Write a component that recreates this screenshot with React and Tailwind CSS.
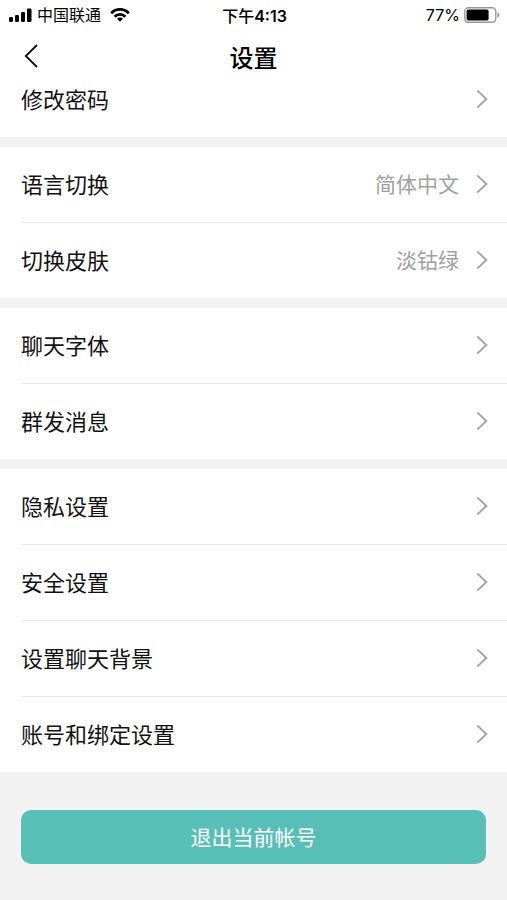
import React from 'react';

const sections = [
  [{ label: '修改密码' }],
  [
    { label: '语言切换', value: '简体中文' },
    { label: '切换皮肤', value: '淡钴绿' },
  ],
  [{ label: '聊天字体' }, { label: '群发消息' }],
  [
    { label: '隐私设置' },
    { label: '安全设置' },
    { label: '设置聊天背景' },
    { label: '账号和绑定设置' },
  ],
];

const SignalIcon = () => (
  <svg width="24" height="14" viewBox="0 0 24 14" fill="#000" aria-hidden="true">
    <rect x="0" y="9" width="4" height="5" rx="1.2" />
    <rect x="6" y="7" width="4" height="7" rx="1.2" />
    <rect x="12" y="4" width="4" height="10" rx="1.2" />
    <rect x="18" y="0.5" width="4.5" height="13.5" rx="1.2" />
  </svg>
);

const WifiIcon = () => (
  <svg width="20" height="14" viewBox="0 0 20 14" fill="none" stroke="#000" strokeWidth="2.7" aria-hidden="true">
    <path d="M1.2 5.2 C6 0.2 14 0.2 18.8 5.2" />
    <path d="M4.6 8.7 C7.6 5.6 12.4 5.6 15.4 8.7" />
    <path d="M10 13.8 L7 10.8 C8.8 9.2 11.2 9.2 13 10.8 Z" fill="#000" stroke="none" />
  </svg>
);

const BatteryIcon = () => (
  <svg width="36" height="16" viewBox="0 0 36 16" aria-hidden="true">
    <rect x="0.8" y="0.8" width="31" height="14.4" rx="3.6" fill="#fff" stroke="#999" strokeWidth="1.4" />
    <rect x="2.6" y="2.6" width="22" height="10.8" rx="1.6" fill="#000" />
    <path d="M33.4 5.4 C36.2 6.2 36.2 9.8 33.4 10.6 Z" fill="#999" />
  </svg>
);

const Chevron = () => (
  <svg width="12" height="20" viewBox="0 0 12 20" fill="none" stroke="#a3a3a3" strokeWidth="1.9" aria-hidden="true">
    <path d="M1.2 1.4 L10.4 10 L1.2 18.6" />
  </svg>
);

const SettingsRow = ({ label, value }) => (
  <li className="group pl-[21px]">
    <button
      type="button"
      className="box-content flex h-[75px] w-full items-center border-t border-[#e9e9e9] text-left group-first:border-t-0"
    >
      <span className="flex-1 pb-1 text-[22px] leading-8 text-[#111]">{label}</span>
      {value && <span className="pb-1 text-[21px] leading-8 text-[#a0a0a0]">{value}</span>}
      <span className="ml-[17px] mr-[19px] pb-0.5">
        <Chevron />
      </span>
    </button>
  </li>
);

const App = () => {
  return (
    <div className="min-h-screen bg-[#f2f2f2] font-['Noto_Sans_CJK_SC','Noto_Sans',sans-serif] text-black">
      <header className="relative z-10 bg-white">
        {/* Status bar */}
        <div className="grid h-[30px] grid-cols-[1fr_auto_1fr] items-center pl-[9px] pr-[7px] text-[16px] leading-6">
          <div className="flex items-center">
            <SignalIcon />
            <span className="ml-1 mr-[9px] pb-0.5">中国联通</span>
            <WifiIcon />
          </div>
          <span className="font-medium">
            下午<span className="font-['Inter',sans-serif] font-semibold">4:13</span>
          </span>
          <div className="flex items-center justify-end gap-1">
            <span className="font-['Inter',sans-serif]">77%</span>
            <BatteryIcon />
          </div>
        </div>

        {/* Title bar */}
        <div className="grid h-14 grid-cols-[1fr_auto_1fr] items-center px-6">
          <button type="button" aria-label="返回" className="w-4 pb-1">
            <svg width="14" height="24" viewBox="0 0 14 24" fill="none" stroke="#111" strokeWidth="1.9">
              <path d="M13 1 L1.8 12 L13 23" />
            </svg>
          </button>
          <h1 className="pb-0.5 text-[24px] font-medium leading-8">设置</h1>
        </div>
      </header>

      {/* List is scrolled a little under the header */}
      <main className="-mt-6">
        <div className="flex flex-col gap-[10px]">
          {sections.map((rows) => (
            <ul key={rows[0].label} className="bg-white">
              {rows.map((row) => (
                <SettingsRow key={row.label} label={row.label} value={row.value} />
              ))}
            </ul>
          ))}
        </div>

        <div className="px-[21px] pb-9 pt-[38px]">
          <button
            type="button"
            className="h-[54px] w-full rounded-[10px] bg-[#58bfb8] pb-0.5 text-[21px] leading-8 text-white"
          >
            退出当前帐号
          </button>
        </div>
      </main>
    </div>
  );
};

export default App;
